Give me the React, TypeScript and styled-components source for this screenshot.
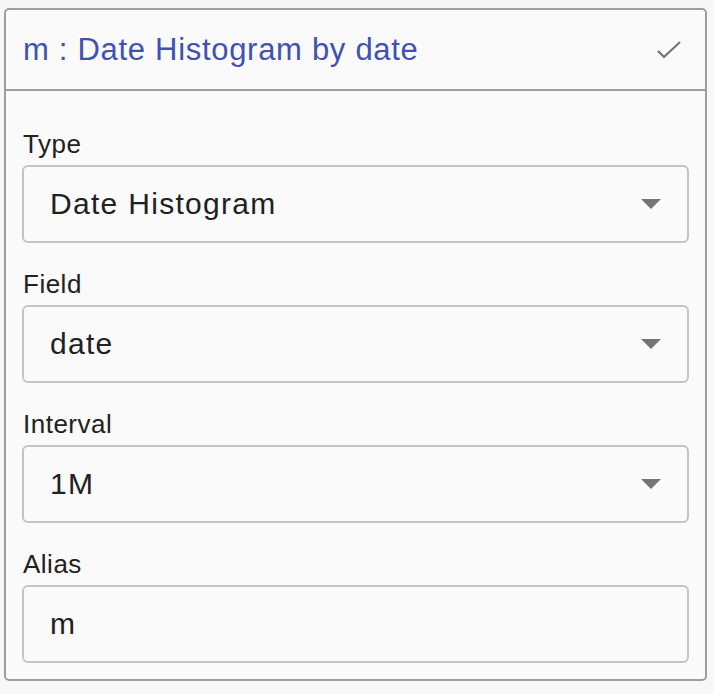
import styled, { createGlobalStyle } from "styled-components";

const GlobalStyle = createGlobalStyle`
    html, body {
        margin: 0;
        padding: 0;
        background: #f7f7f7;
        font-family: "Liberation Sans", Arial, sans-serif;
    }
`;

const Page = styled.div`
    padding: 8px 4px;
`;

const Card = styled.div`
    width: 703px;
    box-sizing: border-box;
    border: 2px solid #9e9e9e;
    border-radius: 5px;
    background: #fafafa;
`;

const Header = styled.div`
    height: 81px;
    box-sizing: border-box;
    border-bottom: 2px solid #9e9e9e;
    display: flex;
    align-items: center;
    justify-content: space-between;
    padding: 1px 24px 0 17px;
`;

const Title = styled.div`
    color: #3f51b5;
    font-size: 31px;
    letter-spacing: 0.7px;
    line-height: 34px;
`;

const CheckIcon = styled.svg`
    width: 24px;
    height: 18px;
    display: block;
`;

const Body = styled.div`
    display: grid;
    row-gap: 26px;
    padding: 38px 16px 16px 16px;
`;

const Field = styled.div`
    display: flex;
    flex-direction: column;
    gap: 6px;
`;

const Label = styled.div`
    color: #212121;
    font-size: 26px;
    letter-spacing: 0.5px;
    line-height: 30px;
    padding-left: 1px;
`;

const Box = styled.div<{ $select?: boolean }>`
    height: 78px;
    box-sizing: border-box;
    border: 2px solid #c4c4c4;
    border-radius: 6px;
    display: flex;
    align-items: center;
    justify-content: space-between;
    padding: 0 26px 0 26px;
    color: #212121;
    font-size: 30px;
    letter-spacing: 1.3px;
    background: #fafafa;
`;

const Arrow = styled.span`
    width: 0;
    height: 0;
    border-left: 10px solid transparent;
    border-right: 10px solid transparent;
    border-top: 10px solid #757575;
`;

const fields = [
    { label: "Type", value: "Date Histogram", select: true },
    { label: "Field", value: "date", select: true },
    { label: "Interval", value: "1M", select: true },
    { label: "Alias", value: "m", select: false },
];

export default function App() {
    return (
        <Page>
            <GlobalStyle />
            <Card>
                <Header>
                    <Title>m : Date Histogram by date</Title>
                    <CheckIcon viewBox="0 0 24 18">
                        <polyline
                            points="1,10 7,16 23,1"
                            fill="none"
                            stroke="#757575"
                            strokeWidth="2.2"
                        />
                    </CheckIcon>
                </Header>
                <Body>
                    {fields.map((f) => (
                        <Field key={f.label}>
                            <Label>{f.label}</Label>
                            <Box $select={f.select}>
                                <span>{f.value}</span>
                                {f.select && <Arrow />}
                            </Box>
                        </Field>
                    ))}
                </Body>
            </Card>
        </Page>
    );
}
